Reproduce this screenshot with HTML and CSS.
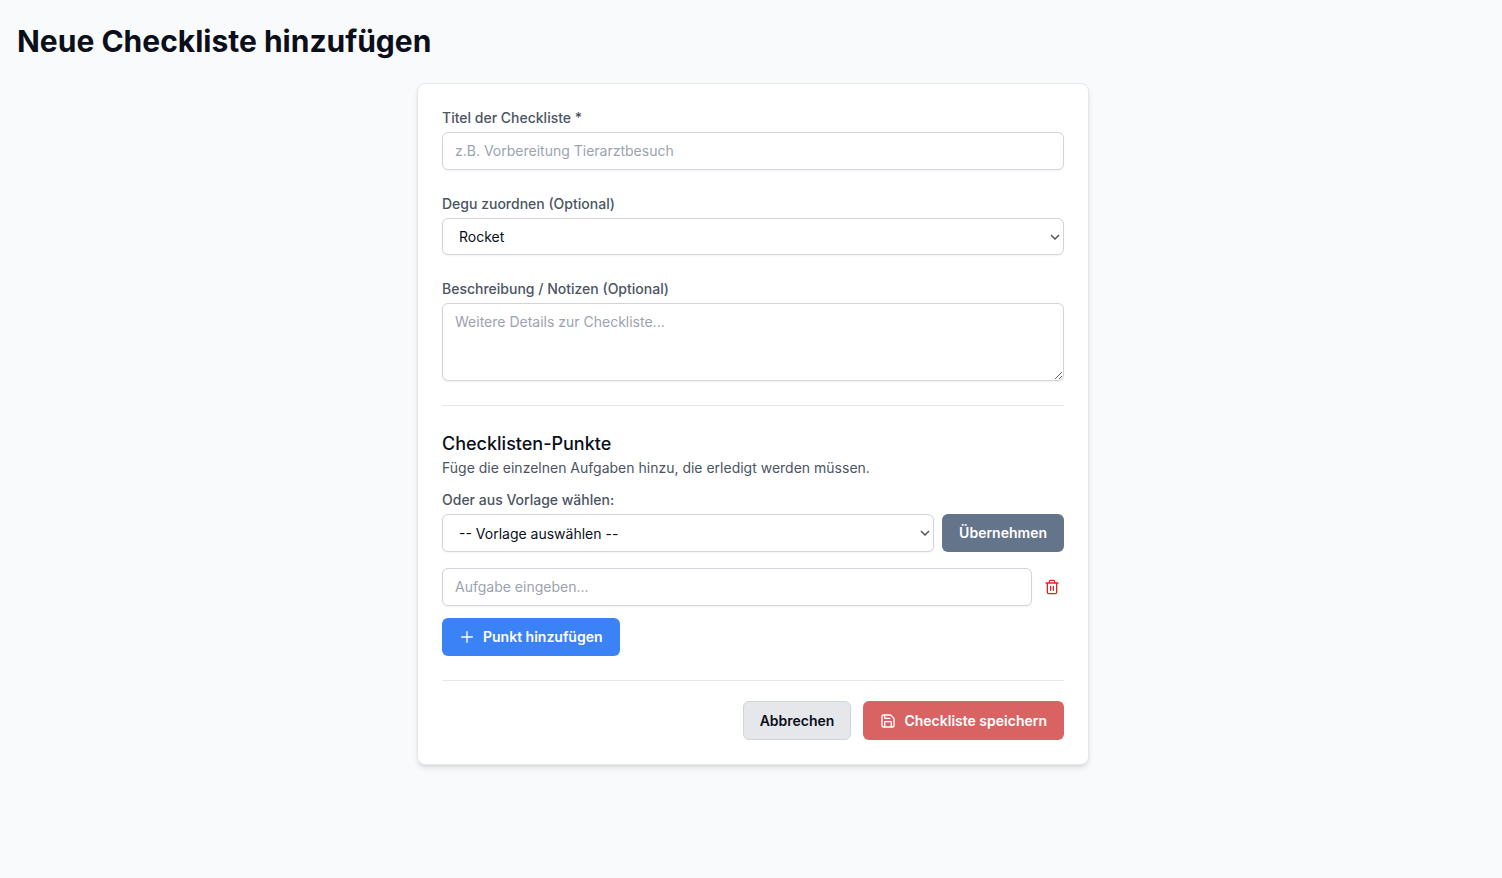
FILE: index.html
```html
<!DOCTYPE html>
<html lang="de">
<head>
	<meta charset="utf-8">
	<meta name="viewport" content="width=device-width, initial-scale=1">
	<title>Neue Checkliste hinzufügen</title>
	<link rel="stylesheet" href="styles.css">
</head>
<body>
	<main class="page">
		<h1>Neue Checkliste hinzufügen</h1>
		<form class="card">
			<div class="field">
				<label for="title">Titel der Checkliste *</label>
				<input class="control" type="text" id="title" placeholder="z.B. Vorbereitung Tierarztbesuch">
			</div>
			<div class="field">
				<label for="degu">Degu zuordnen (Optional)</label>
				<div class="select">
					<select class="control" id="degu">
						<option>Rocket</option>
					</select>
					<svg class="arrow" viewBox="0 0 10 6"><path d="M1 1l4 4 4-4"/></svg>
				</div>
			</div>
			<div class="field">
				<label for="notes">Beschreibung / Notizen (Optional)</label>
				<textarea class="control" id="notes" rows="3" placeholder="Weitere Details zur Checkliste..."></textarea>
			</div>

			<section class="items">
				<h2>Checklisten-Punkte</h2>
				<p>Füge die einzelnen Aufgaben hinzu, die erledigt werden müssen.</p>
				<label for="template">Oder aus Vorlage wählen:</label>
				<div class="row template">
					<div class="select">
						<select class="control" id="template">
							<option>-- Vorlage auswählen --</option>
						</select>
						<svg class="arrow" viewBox="0 0 10 6"><path d="M1 1l4 4 4-4"/></svg>
					</div>
					<button class="btn slate" type="button">Übernehmen</button>
				</div>
				<div class="row task">
					<input class="control" type="text" placeholder="Aufgabe eingeben..." aria-label="Aufgabe">
					<button class="delete" type="button" aria-label="Aufgabe löschen">
						<svg class="icon" viewBox="0 0 24 24"><path d="M3 6h18M19 6v14a2 2 0 0 1-2 2H7a2 2 0 0 1-2-2V6M8 6V4a2 2 0 0 1 2-2h4a2 2 0 0 1 2 2v2M10 11v6M14 11v6"/></svg>
					</button>
				</div>
				<button class="btn blue" type="button">
					<svg class="icon" viewBox="0 0 24 24"><path d="M4 12h16M12 4v16"/></svg>
					Punkt hinzufügen
				</button>
			</section>

			<div class="actions">
				<button class="btn gray" type="button">Abbrechen</button>
				<button class="btn red" type="submit">
					<svg class="icon" viewBox="0 0 24 24"><path d="M15.2 3a2 2 0 0 1 1.4.6l3.8 3.8a2 2 0 0 1 .6 1.4V19a2 2 0 0 1-2 2H5a2 2 0 0 1-2-2V5a2 2 0 0 1 2-2zM17 21v-7a1 1 0 0 0-1-1H8a1 1 0 0 0-1 1v7M7 3v4a1 1 0 0 0 1 1h7"/></svg>
					Checkliste speichern
				</button>
			</div>
		</form>
	</main>
</body>
</html>
```
FILE: styles.css
```css
*{
	box-sizing: border-box;
	margin: 0;
	padding: 0;
}
body{
	background: #f9fafb;
	color: #0a0f1a;
	font-family: Inter, sans-serif;
	font-size: 14px;
	line-height: 20px;
}
input, select, textarea, button{
	font: inherit;
	color: inherit;
}
.page{
	padding: 23px 13px 23px 17px;
}
h1{
	margin-bottom: 24px;
	font-size: 30px;
	line-height: 36px;
	font-weight: 700;
}
.card{
	max-width: 672px;
	margin: 0 auto;
	padding: 24px;
	background: #fff;
	border: 1px solid #e5e7eb;
	border-radius: 8px;
	box-shadow: 0 4px 6px -1px rgba(0,0,0,.1), 0 2px 4px -2px rgba(0,0,0,.1);
}
.field{
	margin-bottom: 24px;
}
label{
	display: block;
	margin-bottom: 4px;
	color: #4b5563;
	font-weight: 500;
}
.control{
	display: block;
	width: 100%;
	padding: 8px 12px;
	background: #fff;
	border: 1px solid #d1d5db;
	border-radius: 6px;
	box-shadow: 0 1px 2px rgba(0,0,0,.05);
}
.control::placeholder{
	color: #9ca3af;
}
textarea.control{
	resize: vertical;
}
.select{
	position: relative;
	flex: 1;
}
select.control{
	appearance: none;
	height: 100%;
	padding: 8px 16px;
	line-height: 19px;
}
.arrow{
	position: absolute;
	right: 4px;
	top: 50%;
	width: 10px;
	height: 6px;
	margin-top: -3px;
	fill: none;
	stroke: #555;
	stroke-width: 1.5;
	pointer-events: none;
}
.items{
	padding: 24px 0;
	border-top: 1px solid #e5e7eb;
	border-bottom: 1px solid #e5e7eb;
}
h2{
	font-size: 18px;
	line-height: 28px;
	font-weight: 500;
}
.items p{
	margin-bottom: 12px;
	color: #4b5563;
}
.row{
	display: flex;
	gap: 8px;
}
.template{
	margin-bottom: 16px;
}
.task{
	align-items: center;
	margin-bottom: 12px;
}
.task .control{
	flex: 1;
}
.icon{
	width: 16px;
	height: 16px;
	fill: none;
	stroke: currentColor;
	stroke-width: 2;
	stroke-linecap: round;
	stroke-linejoin: round;
}
.delete{
	display: flex;
	padding: 4px;
	background: none;
	border: none;
	color: #dc2626;
	cursor: pointer;
}
.btn{
	display: inline-flex;
	align-items: center;
	gap: 8px;
	padding: 8px 16px;
	border: 1px solid transparent;
	border-radius: 6px;
	color: #fff;
	font-weight: 600;
	cursor: pointer;
}
.slate{
	background: #64748b;
}
.blue{
	display: flex;
	background: #3b82f6;
}
.gray{
	background: #e5e7eb;
	border-color: #d1d5db;
	color: #0a0f1a;
}
.red{
	background: #d96363;
}
.actions{
	display: flex;
	justify-content: flex-end;
	gap: 12px;
	padding-top: 20px;
}
.actions .btn{
	min-height: 39px;
}
```
